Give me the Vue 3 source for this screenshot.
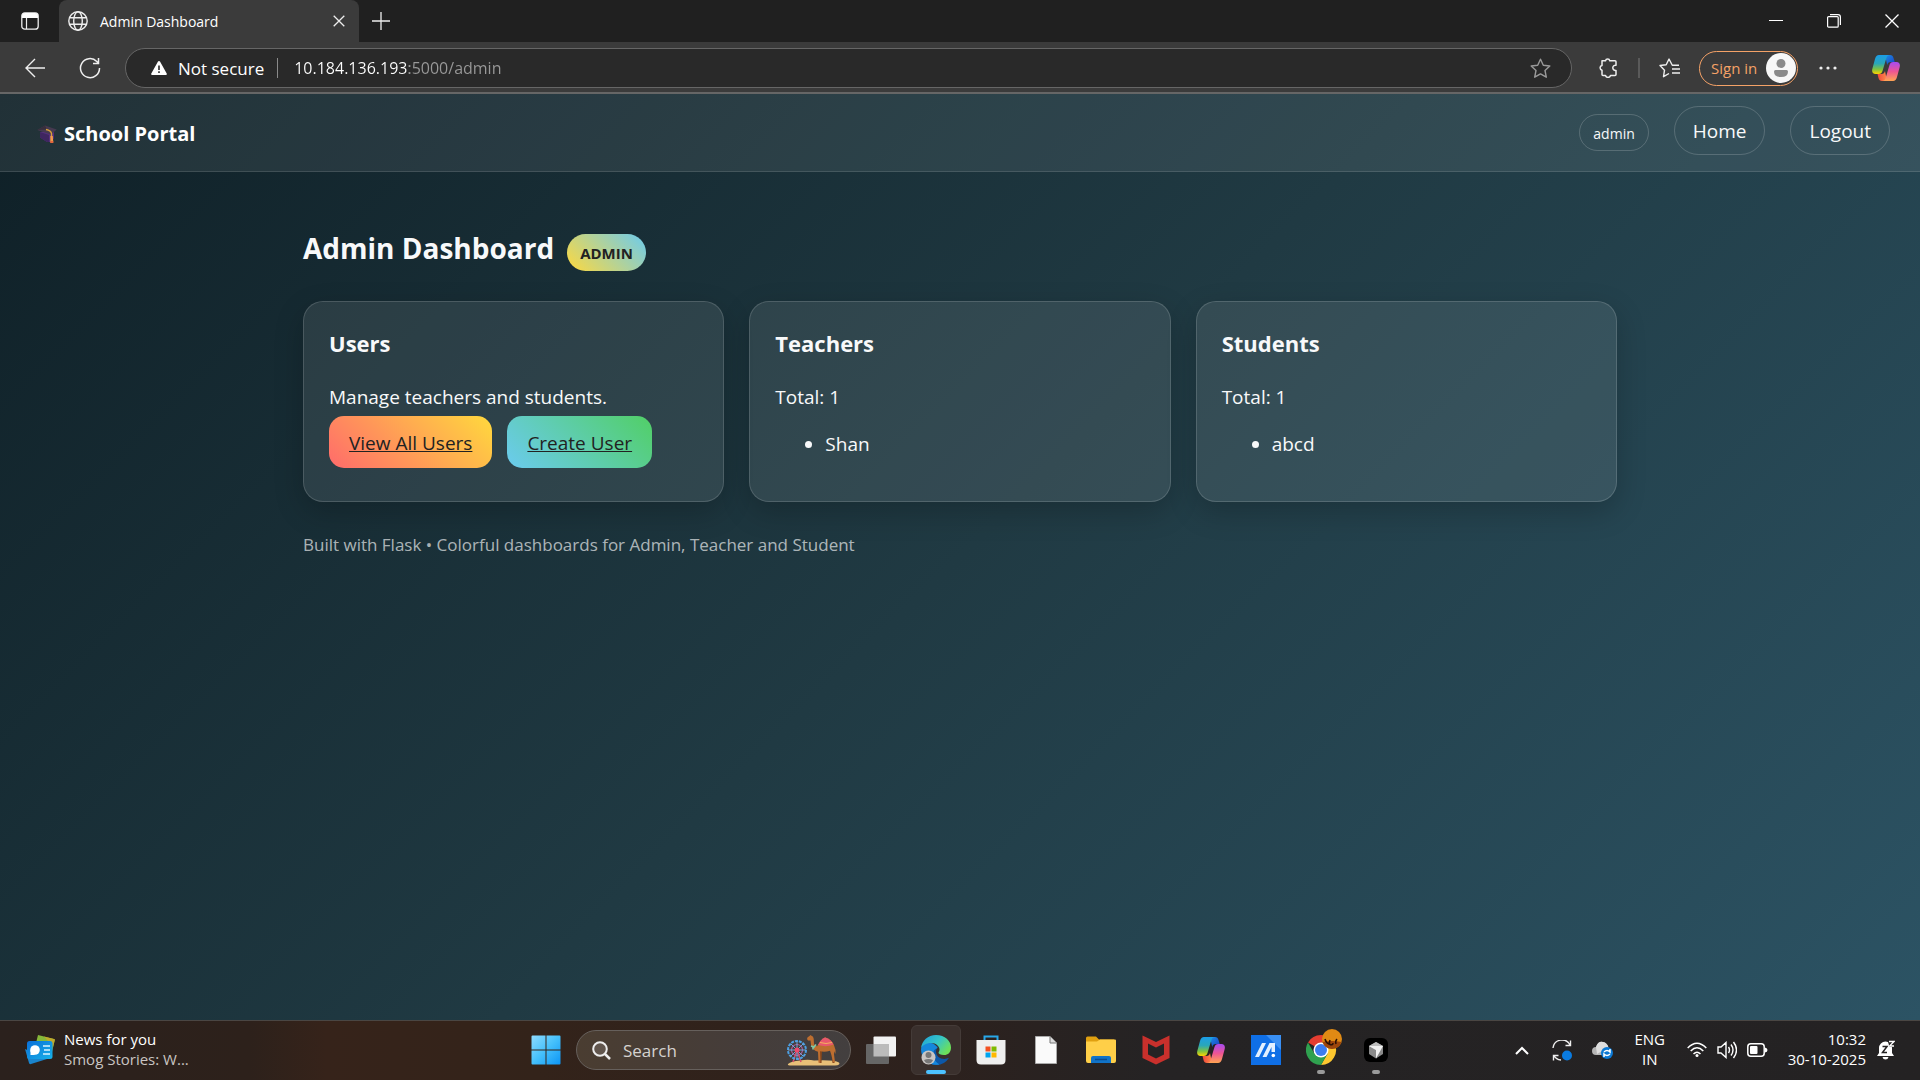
<script setup>
import { ref } from 'vue'

const address = ref('10.184.136.193:5000/admin')
const query = ref('')
const rosters = [
  { title: 'Teachers', people: ['Shan'] },
  { title: 'Students', people: ['abcd'] },
]
</script>

<template>
  <div class="screen">
    <svg class="symbols" aria-hidden="true">
      <defs>
        <linearGradient id="cp-a" x1="0" y1="0" x2="0" y2="1">
          <stop offset="0" stop-color="#1b9de8" /><stop offset=".45" stop-color="#2aa7b8" />
          <stop offset=".75" stop-color="#7fc241" /><stop offset="1" stop-color="#ffd400" />
        </linearGradient>
        <linearGradient id="cp-b" x1="0" y1="0" x2="0" y2="1">
          <stop offset="0" stop-color="#a64bf2" /><stop offset=".5" stop-color="#ee5593" />
          <stop offset="1" stop-color="#ffa552" />
        </linearGradient>
        <linearGradient id="cp-c" x1="0" y1="0" x2="1" y2="1">
          <stop offset="0" stop-color="#1c8fe6" /><stop offset="1" stop-color="#1a3fc4" />
        </linearGradient>
        <linearGradient id="cp-d" x1="0" y1="0" x2="1" y2="0">
          <stop offset="0" stop-color="#f0483a" /><stop offset="1" stop-color="#ff8a4c" />
        </linearGradient>
        <symbol id="copilot" viewBox="0 0 28 26">
          <path d="M13 0h5c2 0 3 1 3.500 3l1.200 4h-4c-2 0-3 1-3.500 3z" fill="url(#cp-c)" />
          <path d="M15 26h-5c-2 0-3-1-3.500-3L5.500 19h4c2 0 3-1 3.500-3z" fill="url(#cp-d)" />
          <path d="M7 0h11c-2 0-3 1.200-3.600 3L10.500 16c-.6 2-1.700 3-3.700 3H3.500C.8 19-.4 17 .3 14L3 4C3.700 1.500 5 0 7 0z" fill="url(#cp-a)" />
          <path d="M21 26H10c2 0 3-1.200 3.600-3l3.900-13c.6-2 1.700-3 3.700-3h3.300c2.700 0 3.900 2 3.200 5L25 22c-.7 2.500-2 4-4 4z" fill="url(#cp-b)" />
        </symbol>
      </defs>
    </svg>

    <header class="tabs">
      <button class="bare workspaces" aria-label="Tab actions">
        <svg width="18" height="18" viewBox="0 0 18 18"><rect x=".8" y=".8" width="16.400" height="16.400" rx="3" fill="none" stroke="#eee" stroke-width="1.300" /><path d="M1 6V4a3 3 0 0 1 3-3h10a3 3 0 0 1 3 3v2z" fill="#fff" /><path d="M5.500 6v11" stroke="#eee" stroke-width="1.200" /></svg>
      </button>
      <div class="tab">
        <svg width="20" height="20" viewBox="0 0 20 20" fill="none" stroke="#eee" stroke-width="1.400"><circle cx="10" cy="10" r="9.200" /><ellipse cx="10" cy="10" rx="4.300" ry="9.200" /><path d="M1.500 6.800h17M1.500 13.200h17" /></svg>
        <span class="tab-title">Admin Dashboard</span>
        <button class="bare" aria-label="Close tab">
          <svg width="12" height="12" viewBox="0 0 12 12"><path d="M.7.700l10.600 10.600M11.300.7L.7 11.300" stroke="#eee" stroke-width="1.300" /></svg>
        </button>
      </div>
      <button class="bare new-tab" aria-label="New tab">
        <svg width="18" height="18" viewBox="0 0 18 18"><path d="M9 0v18M0 9h18" stroke="#eee" stroke-width="1.300" /></svg>
      </button>
      <div class="window-buttons">
        <button class="bare" aria-label="Minimize"><svg width="14" height="14" viewBox="0 0 14 14"><path d="M0 6.500h14" stroke="#fff" /></svg></button>
        <button class="bare" aria-label="Restore"><svg width="14" height="14" viewBox="0 0 14 14" fill="none" stroke="#fff" stroke-width="1.200"><rect x=".6" y="2.600" width="10.600" height="10.600" rx="1" /><path d="M3 .6h8a2.400 2.400 0 0 1 2.400 2.400v8" /></svg></button>
        <button class="bare" aria-label="Close"><svg width="14" height="14" viewBox="0 0 14 14"><path d="M.5.500l13 13M13.500.5l-13 13" stroke="#fff" stroke-width="1.300" /></svg></button>
      </div>
    </header>

    <nav class="toolbar" aria-label="Browser">
      <button class="bare" aria-label="Back"><svg width="20" height="20" viewBox="0 0 20 20" fill="none" stroke="#eee" stroke-width="1.400"><path d="M10 1L1 10l9 9M1 10h19" /></svg></button>
      <button class="bare reload" aria-label="Reload"><svg width="22" height="22" viewBox="0 0 22 22" fill="none" stroke="#eee" stroke-width="1.500"><path d="M20.500 11A9.500 9.500 0 1 1 17.800 4.500L19.500 6.300M19.500 1v5.500h-5.500" /></svg></button>
      <form class="address" @submit.prevent>
        <button type="button" class="bare security">
          <svg width="16" height="14" viewBox="0 0 16 14"><path d="M8 0c.5 0 .8.200 1 .6l6.700 12c.4.800 0 1.400-.8 1.400H1.100c-.8 0-1.200-.6-.8-1.400L7 .6C7.200.2 7.500 0 8 0z" fill="#fff" /><path d="M8 4.500v4.500M8 10.300v1.700" stroke="#292929" stroke-width="1.600" /></svg>
          Not secure
        </button>
        <span class="rule"></span>
        <input v-model="address" class="url" type="text" aria-label="Address" />
        <button type="button" class="bare" aria-label="Add to favorites"><svg width="21" height="21" viewBox="0 0 21 21" fill="none" stroke="#9a9a9a" stroke-width="1.400" stroke-linejoin="round"><path d="M10.500 1.200l2.800 6 6.500.8-4.800 4.500 1.300 6.700-5.800-3.300-5.800 3.300L6 12.500 1.200 8l6.500-.8z" /></svg></button>
      </form>
      <button class="bare extensions" aria-label="Extensions"><svg width="20" height="20" viewBox="0 0 20 20" fill="none" stroke="#eee" stroke-width="1.500" stroke-linejoin="round"><path d="M4 2.800h3.500a2.200 2.200 0 0 1 4.300 0h5.200q1 0 1 1v3.400a2.700 2.700 0 1 0 0 5.300v4q0 1-1 1h-4.500a2.600 2.600 0 0 1-5 0H5q-1 0-1-1v-4.300a2.400 2.400 0 0 1 0-4.700z" /></svg></button>
      <span class="rule dim"></span>
      <button class="bare favorites" aria-label="Favorites"><svg width="21" height="20" viewBox="0 0 21 20" fill="none" stroke="#eee" stroke-width="1.400" stroke-linejoin="round"><path d="M20 7.300h-6.700L10 1 7.200 6.800 1 7.500l4.500 4.700-1 6.500L10 15.500M13 11h8M13 15h8" /></svg></button>
      <button class="signin">
        Sign in
        <svg width="30" height="30" viewBox="0 0 30 30"><circle cx="15" cy="15" r="15" fill="#f7f7f7" /><circle cx="15" cy="10.500" r="4.500" fill="#8a8a8a" /><path d="M8 18.500q0-1.500 1.500-1.500h11q1.500 0 1.500 1.500 0 5.500-7 5.500t-7-5.500z" fill="#8a8a8a" /></svg>
      </button>
      <button class="bare more" aria-label="Settings and more"><svg width="18" height="4" viewBox="0 0 18 4" fill="#eee"><circle cx="2" cy="2" r="1.600" /><circle cx="9" cy="2" r="1.600" /><circle cx="16" cy="2" r="1.600" /></svg></button>
      <button class="bare" aria-label="Copilot"><svg width="28" height="26"><use href="#copilot" /></svg></button>
    </nav>

    <div class="page">
      <header class="site-header">
        <div class="brand">
          <svg width="20" height="20" viewBox="0 0 20 20"><path d="M3 8l7-1 7-1v8.500L13 18h-3l-7-4.500z" fill="#54307a" /><path d="M3 8l9 3v7h-2l-7-4.500z" fill="#3f2660" /><path d="M.3 6L8 1.500 19.700 5.500 14 10.500z" fill="#463a50" /><path d="M.3 6L8 1.500l2 4z" fill="#382f3c" /><path d="M9 5.500q5 1 5.500 4v4" fill="none" stroke="#d9a03a" stroke-width="1.400" /><path d="M13.300 12h2.500l.5 6.500h-3z" fill="#f29a48" /><path d="M13.300 17h3v2h-3z" fill="#e5653e" /></svg>
          School Portal
        </div>
        <nav class="links" aria-label="Site">
          <span class="pill small">admin</span>
          <a class="pill" href="#home">Home</a>
          <a class="pill" href="#logout">Logout</a>
        </nav>
      </header>

      <main class="content">
        <div class="heading">
          <h1>Admin Dashboard</h1>
          <span class="role">ADMIN</span>
        </div>
        <div class="cards">
          <section class="card">
            <h2>Users</h2>
            <p>Manage teachers and students.</p>
            <div class="actions">
              <a class="action warm" href="#users">View All Users</a>
              <a class="action cool" href="#create">Create User</a>
            </div>
          </section>
          <section v-for="roster in rosters" :key="roster.title" class="card">
            <h2>{{ roster.title }}</h2>
            <p>Total: {{ roster.people.length }}</p>
            <ul>
              <li v-for="person in roster.people" :key="person">{{ person }}</li>
            </ul>
          </section>
        </div>
        <footer>Built with Flask • Colorful dashboards for Admin, Teacher and Student</footer>
      </main>
    </div>

    <footer class="taskbar">
      <button class="bare news">
        <svg width="30" height="30" viewBox="0 0 30 30">
          <defs><linearGradient id="nw" x1="0" y1="0" x2="1" y2="1"><stop offset="0" stop-color="#0a6fd8" /><stop offset="1" stop-color="#17b1e8" /></linearGradient></defs>
          <path d="M13 0l16 4q1 0 .8 1L27 17 10 12z" fill="#86b83a" /><path d="M19 1.500L29 4q1 0 .8 1L28 12z" fill="#c0a92c" />
          <path d="M0 14l4 14q.3 1.500 2 1l16-5z" fill="#1a84cc" />
          <rect x="2" y="6" width="25.500" height="18" rx="2.500" fill="url(#nw)" />
          <circle cx="10" cy="15" r="4.800" fill="#fff" /><path d="M5.500 15v5H10z" fill="#fff" /><path d="M18 11h7M19 15h6M18 19h7" stroke="#d9f4ff" stroke-width="1.600" />
        </svg>
        <span class="lines"><span>News for you</span><span class="muted">Smog Stories: W...</span></span>
      </button>

      <div class="apps">
        <button class="app" aria-label="Start"><svg width="30" height="30" viewBox="0 0 30 30"><defs><linearGradient id="wn" x1="0" y1="0" x2="1" y2="1"><stop offset="0" stop-color="#8fdcff" /><stop offset=".5" stop-color="#45c0fb" /><stop offset="1" stop-color="#0c95f5" /></linearGradient></defs><path d="M.5 1.500q0-1 1-1h13V14.500H.5zM15.500.5h13q1 0 1 1v13h-14zM.5 15.500h14v14h-13q-1 0-1-1zM15.500 15.500h14v13q0 1-1 1h-13z" fill="url(#wn)" /></svg></button>
        <label class="search">
          <svg width="19" height="19" viewBox="0 0 19 19"><circle cx="8" cy="8" r="6.800" fill="#ffffff22" stroke="#eee" stroke-width="2" /><path d="M13 13l5 5" stroke="#eee" stroke-width="2.500" /></svg>
          <input v-model="query" type="search" placeholder="Search" aria-label="Search" />
          <svg width="54" height="32" viewBox="0 0 54 32">
            <path d="M1 30q3-3 12-3.500 8-1.500 14 0 20-1 25 2 2 2.500-4 3H5q-5 0-4-1.500z" fill="#e8c078" />
            <path d="M6 28l4-12 4 12" stroke="#d8506a" stroke-width="1.500" fill="none" />
            <circle cx="10" cy="16" r="9" fill="none" stroke="#4c9fe2" stroke-width="2" stroke-dasharray="3 1" />
            <circle cx="10" cy="16" r="5.500" fill="none" stroke="#b05c9c" stroke-width="1.200" />
            <path d="M10 7v18M1 16h18M3.600 9.600l12.800 12.800M16.400 9.600L3.600 22.400" stroke="#6ba7dd" /><circle cx="10" cy="16" r="2.500" fill="#f0476a" />
            <path d="M34 17l-.5 12M45 16l1.500 13" stroke="#84451c" stroke-width="2" fill="none" />
            <path d="M20 5q0-2 2.500-3l1-1 1 .8q2 .5 2.200 3l.3 5q.5 2.500 3 2.500 3-5.500 8-9 6.500 2 9 8 2 4 1.500 9l-1-3-.5 3 1 8h-2l-1.500-7-1.500-4.500q-5 1.500-10 .5l.5 11.500h-2l-.5-11q-6-1.500-7-7L23.500 6.500l-2.500 0z" fill="#bd6e30" />
            <path d="M31 11q2.500-6 7-7.500 6 1.500 8.500 7-7 3-15.500.5z" fill="#e8586c" /><path d="M33 8.500q6 2 12 0" stroke="#f4b25e" fill="none" /><path d="M24 12l3 1 2-2.500M26 13v2.500" stroke="#7ec9a8" stroke-width="1.500" fill="none" />
          </svg>
        </label>
        <button class="app" aria-label="Task view"><svg width="30" height="28" viewBox="0 0 30 28"><rect x="7.500" y=".5" width="22.500" height="20" rx="1" fill="#f2f2f2" /><rect y="8" width="23" height="20" rx="1" fill="#666" /><rect x="7.500" y="8" width="15.500" height="12.500" fill="#bbb" /></svg></button>
        <button class="app active" aria-label="Microsoft Edge">
          <svg width="30" height="30" viewBox="0 0 30 30">
            <defs><linearGradient id="eg" x1="0" y1="0" x2="1" y2=".6"><stop offset="0" stop-color="#1d9fdc" /><stop offset=".55" stop-color="#35c5c8" /><stop offset="1" stop-color="#6ce05a" /></linearGradient></defs>
            <path d="M15 30a15 15 0 0 0 13-7.200c-6 3-13-.3-13-6.300 0-2 1-3.500 2-4.500L10 9 4 15q1 15 11 15z" fill="#0c58a8" />
            <path d="M0 14c1-5 6-7 10-6 3 .7 6 3 6.500 5-4 1-5 5-4 9 .8 3 3 6 6 7.500C8 31.500 0 24 0 14z" fill="#1587dc" />
            <path d="M0 13.500C.8 5.500 7 0 15 0c9 0 15 6 15 12.500 0 5-3 7.500-7 7.500-3.500 0-5.500-1-5.500-2.200 0-.8 1-1.300 1-3.300 0-3-3-6.500-8.500-6.500-5 0-9 2.500-10 5.500z" fill="url(#eg)" />
            <circle cx="7.500" cy="22.500" r="7" fill="#c9c6c4" /><circle cx="7.500" cy="20" r="3" fill="#777" /><path d="M3 25q4.500-2 9 0-1.500 3.500-4.500 3.500T3 25z" fill="#777" />
          </svg>
        </button>
        <button class="app" aria-label="Microsoft Store"><svg width="30" height="30" viewBox="0 0 30 30"><path d="M8.500 6V1.500h13V6" fill="none" stroke="#28a8ea" stroke-width="2" /><path d="M.5 5h29v20q0 4.500-4.500 4.500H5Q.5 29.500.5 25z" fill="#efefef" /><path d="M9.500 11.500h5v5h-5z" fill="#f25022" /><path d="M15.500 11.500h5v5h-5z" fill="#7fba00" /><path d="M9.500 17.500h5v5h-5z" fill="#00a4ef" /><path d="M15.500 17.500h5v5h-5z" fill="#ffb900" /></svg></button>
        <button class="app" aria-label="Document"><svg width="22" height="28" viewBox="0 0 22 28"><path d="M.5.500h14.500l6.500 6.500v20.500H.5z" fill="#fafafa" stroke="#aaa" /><path d="M15 .5V7h6.500" fill="#ddd" stroke="#777" /></svg></button>
        <button class="app" aria-label="File Explorer"><svg width="30" height="28" viewBox="0 0 30 28"><path d="M0 2q0-1.500 1.500-1.500H10l3 3h15v9H0z" fill="#e0a010" /><path d="M0 5.500h11l3-2h15q1 0 1 1V25q0 2-2 2H2q-2 0-2-2z" fill="#ffcf48" /><path d="M5 27v-5q0-2 2-2h16q2 0 2 2v5z" fill="#1173c8" /><path d="M9 23.500h12" stroke="#0b4c90" stroke-width="1.500" /></svg></button>
        <button class="app" aria-label="McAfee"><svg width="28" height="30" viewBox="0 0 28 30"><path d="M.5.500L14 7 27.500.5v22.500L14 29.500.5 23zM6 8.500V19.500L14 23.500l8-4V8.500l-8 4z" fill="#c9302c" fill-rule="evenodd" /></svg></button>
        <button class="app" aria-label="Copilot"><svg width="28" height="26"><use href="#copilot" /></svg></button>
        <button class="app" aria-label="MyASUS"><svg width="30" height="30" viewBox="0 0 30 30"><path d="M0 0h30v30H0z" fill="#0f6fe6" /><path d="M15 0h15v15z" fill="#3a90f4" /><path d="M4 22L11 8h4L8 22zM11.500 22L18.500 8H24v9h-3.500v-5L15.500 22z" fill="#e2f0ff" /><circle cx="22.300" cy="20.500" r="1.800" fill="#fff" /></svg></button>
        <button class="app running" aria-label="Google Chrome">
          <svg class="badged" width="36" height="36" viewBox="0 0 36 36">
            <path d="M15 21L2 13.500A15 15 0 0 1 28 13.500H15z" fill="#e53d31" />
            <path d="M15 13.500h13A15 15 0 0 1 15 36l6.500-11.300z" fill="#fdc72f" />
            <path d="M2 13.500A15 15 0 0 0 15 36l6.500-11.300L15 21 8.500 24.800z" fill="#2fa14f" />
            <circle cx="15" cy="21" r="7.500" fill="#fff" /><circle cx="15" cy="21" r="6" fill="#3c7df0" />
            <circle cx="26" cy="10" r="10" fill="#e08a14" /><path d="M16.500 13q9-2 19 0a10 10 0 0 1-19 0z" fill="#9c460c" />
            <path d="M19 10q1 4 4 5M24 11l-1 4q4 2 4-1M31 10q-2 2-1 5" stroke="#2a1005" stroke-width="1.500" fill="none" />
          </svg>
        </button>
        <button class="app running" aria-label="Cursor"><svg width="24" height="24" viewBox="0 0 24 24"><rect width="24" height="24" rx="6" fill="#000" /><path d="M12 4l7 4v8l-7 4.500L5 16V8z" fill="#8a8a8a" /><path d="M12 4l7 4-7 4-7-4z" fill="#bdbdbd" /><path d="M5 8h14l-7 12.500V12z" fill="#f0f0f0" /></svg></button>
      </div>

      <div class="tray">
        <button class="bare" aria-label="Hidden icons"><svg width="14" height="9" viewBox="0 0 14 9"><path d="M1 8l6-6 6 6" fill="none" stroke="#fff" stroke-width="2" /></svg></button>
        <button class="bare sync" aria-label="Updates"><svg width="20" height="21" viewBox="0 0 20 21" fill="none" stroke="#eee" stroke-width="1.400"><path d="M1 8A9 9 0 0 1 18 5M18.500.5V5.500h-5M1.500 20.500V15.500h5M2 15.500q2 4 7 4.500" /><circle cx="15" cy="15.500" r="5" fill="#0a7be0" stroke="none" /></svg></button>
        <button class="bare cloud" aria-label="OneDrive"><svg width="21" height="18" viewBox="0 0 21 18"><path d="M4 14a4 4 0 0 1 0-8Q6 0 11 1q4 .5 5.500 5.500L18 14z" fill="#b5b5b5" /><path d="M4 6Q6 0 11 1q4 .5 5.500 5.500L5 13z" fill="#dedede" /><circle cx="15" cy="12" r="6" fill="#0a78d4" /><path d="M12 11q3-3 6 0V8M18 13q-3 3-6 0v3" fill="none" stroke="#fff" stroke-width="1.500" /></svg></button>
        <button class="bare lines lang"><span>ENG</span><span>IN</span></button>
        <button class="bare status" aria-label="Network, sound and battery">
          <svg width="20" height="16" viewBox="0 0 20 16" fill="none" stroke="#fff" stroke-width="1.500"><path d="M.7 6q9.300-9.500 18.600 0M3.700 9q6.300-6.500 12.600 0M6.500 12q3.500-3.500 7 0" /><circle cx="10" cy="13.500" r="1.500" fill="#fff" stroke="none" /></svg>
          <svg width="20" height="18" viewBox="0 0 20 18" fill="none" stroke="#fff" stroke-width="1.400"><path d="M1 6h3l5-4.500v15L4 12H1zM11.500 6q2 3 0 6M14 3.500q4 5.500 0 11M16.500 1q6 8 0 16" /></svg>
          <svg width="21" height="14" viewBox="0 0 21 14"><rect x=".8" y=".8" width="16.400" height="12.400" rx="3" fill="none" stroke="#fff" stroke-width="1.500" /><rect x="3" y="3" width="7.500" height="8" rx="1" fill="#fff" /><path d="M18 4.500q2.500.5 2.500 2.500T18 9.500z" fill="#fff" /></svg>
        </button>
        <button class="bare lines clock"><span>10:32</span><span>30-10-2025</span></button>
        <button class="bare" aria-label="Notifications"><svg width="18" height="20" viewBox="0 0 18 20"><path d="M0 16l2-3V8a6.500 6.500 0 0 1 13 0v5l2 3zM5.500 17h6q-.5 2.500-3 2.500T5.500 17z" fill="#fff" /><path d="M5.500 6.500H10l-4.500 6H10" fill="none" stroke="#242223" stroke-width="1.500" /><path d="M10.500 0H18v7h-5.500z" fill="#242223" /><path d="M12 1.500h5l-4.500 4.500H17" fill="none" stroke="#fff" stroke-width="1.300" /></svg></button>
      </div>
    </footer>
  </div>
</template>

<style>
body {
  margin: 0;
}
</style>

<style scoped>
* {
  box-sizing: border-box;
}
.screen {
  display: flex;
  flex-direction: column;
  min-height: 100vh;
  color: #fff;
  font-family: "Open Sans", "Noto Sans", sans-serif;
  font-size: 19px;
}
.symbols {
  position: absolute;
  width: 0;
  height: 0;
}
svg {
  display: block;
  flex: none;
}
button,
input {
  margin: 0;
  padding: 0;
  border: 0;
  outline: 0;
  background: none;
  color: inherit;
  font: inherit;
}
.bare {
  display: flex;
  align-items: center;
}

.tabs {
  display: flex;
  height: 42px;
  background: #202020;
}
.workspaces {
  width: 59px;
  padding-left: 21px;
}
.tab {
  display: flex;
  align-items: center;
  width: 300px;
  padding: 0 14px 0 9px;
  border-radius: 8px 8px 0 0;
  background: #3b3b3b;
  font-size: 14px;
}
.tab-title {
  flex: 1;
  margin-left: 12px;
}
.new-tab {
  margin-left: 13px;
}
.window-buttons {
  display: flex;
  gap: 44px;
  margin-left: auto;
  padding-right: 21px;
}

.toolbar {
  display: flex;
  align-items: center;
  height: 52px;
  padding: 2px 20px 0 25px;
  border-bottom: 2px solid #666;
  background: #3b3b3b;
}
.reload {
  margin: 0 24px 0 34px;
}
.address {
  display: flex;
  flex: 1;
  align-items: center;
  height: 40px;
  padding: 0 20px 0 25px;
  border: 1px solid #666;
  border-radius: 20px;
  background: #292929;
  font-size: 17px;
}
.security {
  gap: 11px;
}
.rule {
  width: 1px;
  height: 20px;
  margin: 0 16px 0 13px;
  background: #8a8a8a;
}
.url {
  flex: 1;
  min-width: 0;
  height: 30px;
  background: linear-gradient(90deg, #fff 115px, #999 115px);
  background-clip: text;
  -webkit-text-fill-color: transparent;
  font-size: 16px;
}
.extensions {
  margin-left: 26px;
}
.rule.dim {
  width: 2px;
  margin: 0 19px 0 20px;
  background: #5a5a5a;
}
.favorites {
  margin-right: 19px;
}
.signin {
  display: flex;
  align-items: center;
  justify-content: space-between;
  width: 99px;
  height: 35px;
  padding: 0 1px 0 11px;
  border: 1px solid #f5a267;
  border-radius: 18px;
  color: #f5a267;
  font-size: 15px;
}
.more {
  margin: 0 35px 0 21px;
}

.page {
  flex: 1;
  background: linear-gradient(135deg, #0f2027, #203a43, #2c5364);
}
.site-header {
  display: flex;
  align-items: center;
  justify-content: space-between;
  height: 78px;
  padding: 0 30px 4px 37px;
  border-bottom: 1px solid rgba(255, 255, 255, 0.12);
  background: rgba(255, 255, 255, 0.08);
}
.brand {
  display: flex;
  align-items: center;
  gap: 7px;
  padding-top: 6px;
  font-size: 20px;
  font-weight: 700;
}
.links {
  display: flex;
  align-items: center;
  gap: 25px;
}
.pill {
  padding: 2px 18px 0;
  border: 1px solid rgba(255, 255, 255, 0.18);
  border-radius: 25px;
  color: #f8f9fa;
  line-height: 45px;
  text-decoration: none;
}
.pill.small {
  margin-top: 3px;
  padding: 2px 13px 0;
  font-size: 14px;
  line-height: 33px;
}

.content {
  width: 69%;
  max-width: 1314px;
  min-width: 1100px;
  margin: 0 auto;
  padding: 56px 0 30px;
  color: #f8f9fa;
}
.heading {
  display: flex;
  gap: 13px;
  margin-bottom: 30px;
}
h1,
h2,
p,
ul {
  margin: 0;
}
h1 {
  font-size: 28px;
  line-height: 40px;
}
.role {
  margin-top: 6px;
  padding: 2px 13px 0;
  border-radius: 20px;
  background: linear-gradient(45deg, #ffd93d, #6bcbef);
  color: #222;
  font-size: 15px;
  font-weight: 700;
  line-height: 35px;
}
.cards {
  display: grid;
  grid-template-columns: repeat(3, 1fr);
  gap: 25px;
}
.card {
  padding: 25px 25px 33px;
  border: 1px solid rgba(255, 255, 255, 0.15);
  border-radius: 20px;
  background: rgba(255, 255, 255, 0.09);
  box-shadow: 0 10px 30px rgba(0, 0, 0, 0.2);
}
h2 {
  margin-bottom: 22px;
  font-size: 22px;
  line-height: 32px;
}
p {
  padding-bottom: 2px;
  line-height: 33px;
}
ul {
  margin-top: 12px;
  padding-left: 50px;
  line-height: 32px;
}
.actions {
  display: flex;
  gap: 15px;
}
.action {
  padding: 2px 20px 0;
  border-radius: 15px;
  color: #222;
  font-weight: 500;
  line-height: 50px;
}
.warm {
  background: linear-gradient(45deg, #ff6b6b, #ffd93d);
}
.cool {
  background: linear-gradient(45deg, #6bcbef, #51cf66);
}
.content footer {
  margin-top: 28px;
  color: rgba(255, 255, 255, 0.65);
  font-size: 17px;
  line-height: 30px;
}

.taskbar {
  display: grid;
  grid-template-columns: 1fr auto 1fr;
  align-items: center;
  height: 60px;
  padding-bottom: 1px;
  border-top: 1px solid #4a4643;
  background: linear-gradient(90deg, #2b211d 0%, #2d211b 13%, #36231a 17%, #33231a 28%, #2d211d 48%, #252324 60%, #242223 100%);
  font-size: 15px;
}
.news {
  justify-self: start;
  gap: 9px;
  margin-left: 25px;
  text-align: left;
}
.lines {
  display: flex;
  flex-direction: column;
  padding-bottom: 2px;
  line-height: 20px;
}
.muted {
  color: #c9c5c2;
}
.apps {
  display: flex;
  align-items: center;
  gap: 5px;
  padding-left: 2px;
}
.app {
  display: flex;
  position: relative;
  align-items: center;
  justify-content: center;
  width: 50px;
  height: 50px;
  border: 1px solid transparent;
  border-radius: 6px;
}
.active {
  border-color: #443b38;
  background: #3a302d;
}
.active::after,
.running::after {
  content: "";
  position: absolute;
  bottom: 0;
  width: 20px;
  height: 4px;
  border-radius: 2px;
  background: #4cc2ff;
}
.running::after {
  width: 8px;
  background: #9a9a9a;
}
.badged {
  margin: 0 0 6px 6px;
}
.search {
  display: flex;
  align-items: center;
  width: 275px;
  height: 40px;
  padding: 0 9px 0 15px;
  border: 1px solid #66605c;
  border-radius: 20px;
  background: linear-gradient(90deg, #4a3d31, #453d3a 60%, #433f3f);
}
.search input {
  flex: 1;
  min-width: 0;
  margin-left: 12px;
  color: #d5d2cf;
  font-size: 17px;
}
.search input::placeholder {
  color: #d5d2cf;
  opacity: 1;
}
.tray {
  display: flex;
  align-items: center;
  justify-content: flex-end;
  padding-right: 25px;
}
.sync {
  margin: 0 20px 0 23px;
}
.lang {
  width: 36px;
  margin: 0 19px;
  text-align: center;
}
.status {
  gap: 10px;
}
.clock {
  align-items: flex-end;
  margin: 0 11px 0 20px;
}
</style>
